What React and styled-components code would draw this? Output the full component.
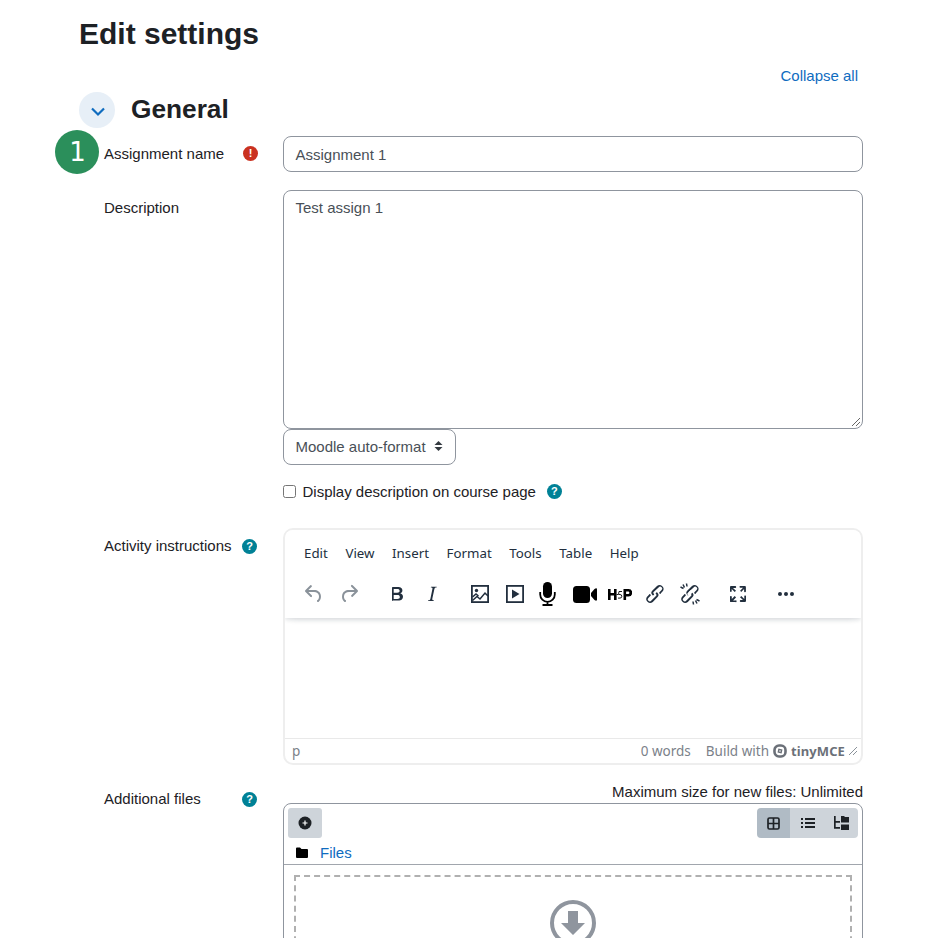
import React from "react";
import styled, { createGlobalStyle } from "styled-components";

const Global = createGlobalStyle`
  html, body { margin: 0; padding: 0; background: #fff; height: 938px; overflow: hidden; }
  body { font-family: "Liberation Sans", Arial, sans-serif; font-size: 15px; color: #1d2125; }
  * { box-sizing: border-box; }
`;

const Page = styled.main`
  position: relative;
  height: 938px;
  overflow: hidden;
  padding: 17px 75px 0 79px;
`;
const Title = styled.h1`
  margin: 0;
  font-size: 30px;
  line-height: 34px;
  font-weight: 700;
`;
const CollapseRow = styled.div`
  display: flex;
  justify-content: flex-end;
  margin-top: 16px;
  padding-right: 5px;
  height: 17px;
  line-height: 17px;
`;
const Link = styled.a`
  color: #0f6cbf;
  font-size: 15px;
`;
const SectionHead = styled.div`
  display: flex;
  align-items: center;
  gap: 16px;
  margin-top: 8px;
  height: 36px;
`;
const Toggle = styled.span`
  width: 36px;
  height: 36px;
  border-radius: 50%;
  background: #e7eff7;
  display: flex;
  align-items: center;
  justify-content: center;
  padding: 2px 0 0 2px;
`;
const SectionTitle = styled.h2`
  margin: 0 0 2px;
  font-size: 26.25px;
  line-height: 32px;
  font-weight: 700;
`;
const StepBadge = styled.span`
  position: absolute;
  left: 55px;
  top: 130px;
  width: 44px;
  height: 44px;
  padding-left: 1px;
  border-radius: 50%;
  background: #2b8f5b;
  color: #fff;
  font-family: "DejaVu Sans", sans-serif;
  font-size: 26px;
  display: flex;
  align-items: center;
  justify-content: center;
`;
const Row = styled.div`
  display: grid;
  grid-template-columns: 179px 580px;
  padding-left: 25px;
  margin-top: ${(p) => p.$top}px;
`;
const LabelCell = styled.div`
  display: flex;
  align-items: flex-start;
  padding-top: ${(p) => p.$pad ?? 9}px;
  line-height: 17px;
  font-size: 15px;
`;
const LabelText = styled.span`
  width: 138px;
  flex: none;
`;
const Dot = styled.span`
  width: 15px;
  height: 15px;
  border-radius: 50%;
  background: ${(p) => p.$bg};
  color: #fff;
  font-size: 11px;
  font-weight: 700;
  line-height: 15px;
  text-align: center;
  flex: none;
  margin-top: ${(p) => p.$mt ?? 1}px;
  margin-left: ${(p) => p.$ml ?? 0}px;
`;
const Field = styled.div`
  display: flex;
  flex-direction: column;
  align-items: flex-start;
`;
const TextInput = styled.div`
  width: 100%;
  height: 36px;
  border: 1px solid #8f959e;
  border-radius: 8px;
  padding: 9px 12px 7px 11.5px;
  line-height: 18px;
  color: #495057;
`;
const TextArea = styled(TextInput)`
  position: relative;
  height: 239px;
  padding-top: 8px;
`;
const Grip = styled.svg`
  position: absolute;
  right: 1px;
  bottom: 1px;
`;
const Select = styled.div`
  height: 36px;
  width: 173px;
  border: 1px solid #8f959e;
  border-radius: 8px;
  padding: 0 12px 2px 11.5px;
  display: flex;
  align-items: center;
  justify-content: space-between;
  color: #495057;
`;
const CheckRow = styled.label`
  display: flex;
  align-items: center;
  margin-top: 17px;
  height: 18px;
  color: #1d2125;
`;
const Box = styled.span`
  width: 13px;
  height: 13px;
  border: 1px solid #767676;
  border-radius: 2.5px;
  margin-right: 6.5px;
`;
const Editor = styled.div`
  width: 100%;
  height: 237px;
  border: 2px solid #eeeeee;
  border-radius: 10px;
  display: flex;
  flex-direction: column;
  overflow: hidden;
`;
const EditorHeader = styled.div`
  height: 88px;
  box-shadow: 0 2px 4px rgba(34, 47, 62, 0.12), 0 6px 8px -6px rgba(34, 47, 62, 0.1);
  position: relative;
  z-index: 1;
  background: #fff;
`;
const MenuBar = styled.div`
  display: flex;
  gap: 17.6px;
  padding: 14px 0 0 19px;
  height: 44px;
  font-family: "Noto Sans", sans-serif;
  font-size: 13.3px;
  line-height: 19px;
  color: #222f3e;
`;
const ToolBar = styled.div`
  display: flex;
  align-items: center;
  height: 40px;
  padding-left: 10px;
`;
const Tool = styled.span`
  width: ${(p) => p.$w ?? 36}px;
  margin-left: ${(p) => p.$ml ?? 0}px;
  display: flex;
  justify-content: center;
  align-items: center;
  flex: none;
`;
const EditorBody = styled.div`
  flex: 1;
`;
const StatusBar = styled.div`
  height: 25px;
  border-top: 1px solid #e9e9e9;
  display: flex;
  align-items: center;
  padding: 0 3px 0 7px;
  font-family: "Noto Sans", sans-serif;
  font-size: 13.5px;
  color: #7b8189;
`;
const Path = styled.span`
  margin-right: auto;
`;
const Words = styled.span`
  margin-right: 15px;
`;
const Brand = styled.span`
  display: flex;
  align-items: center;
  gap: 4px;
`;
const BrandName = styled.b`
  font-weight: 700;
  font-size: 13px;
  letter-spacing: 0.1px;
  color: #6b7078;
  margin-right: 3px;
`;
const MaxSize = styled.div`
  align-self: flex-end;
  line-height: 18px;
  height: 22px;
  padding-top: 2px;
`;
const FilePicker = styled.div`
  width: 100%;
  height: 300px;
  border: 1px solid #8f959e;
  border-radius: 8px 8px 0 0;
`;
const FileBar = styled.div`
  height: 61px;
  border-bottom: 1px solid #a1a6ad;
  padding: 4px;
  position: relative;
`;
const AddBtn = styled.span`
  width: 34px;
  height: 30px;
  background: #ced4da;
  border-radius: 3px;
  display: flex;
  align-items: center;
  justify-content: center;
`;
const ViewGroup = styled.div`
  position: absolute;
  right: 4px;
  top: 4px;
  display: flex;
  height: 30px;
  border-radius: 4px;
  overflow: hidden;
`;
const ViewBtn = styled.span`
  width: ${(p) => p.$w}px;
  background: ${(p) => (p.$on ? "#b0bbc5" : "#ced4da")};
  display: flex;
  align-items: center;
  justify-content: center;
  padding-right: ${(p) => p.$pr ?? 0}px;
`;
const Crumb = styled.div`
  display: flex;
  align-items: center;
  gap: 12px;
  padding: 5px 0 0 8px;
  height: 20px;
  margin-top: 2px;
`;
const Drop = styled.div`
  margin: 10px 10px 0;
  height: 200px;
  border: 2px dashed #b0b0b0;
  display: flex;
  justify-content: center;
  padding-top: 23px;
`;

const Navy = "#222f3e";
const Grey = "#8a929a";
const LINK = "M6.2 12.3a1 1 0 0 1 1.4 1.4l-2 2a2 2 0 1 0 2.8 2.8l4.8-4.8a1 1 0 0 0 0-1.4 1 1 0 1 1 1.4-1.3 2.9 2.9 0 0 1 0 4L9.8 19.900a3.900 3.900 0 0 1-5.500-5.500l1.900-2zm11.600-.6a1 1 0 0 1-1.400-1.400l2-2a2 2 0 1 0-2.800-2.800L10.600 10a1 1 0 0 0 0 1.400 1 1 0 1 1-1.400 1.300 2.900 2.900 0 0 1 0-4L14 4.100a3.900 3.900 0 0 1 5.500 5.500l-1.900 2z";

const TinyIcon = ({ d, fill = Navy, size = 24, children }) => (
  <svg width={size} height={size} viewBox="0 0 24 24" fill={fill}>
    {d && <path d={d} />}
    {children}
  </svg>
);

const App = () => (
  <>
    <Global />
    <Page>
      <Title>Edit settings</Title>
      <CollapseRow><Link>Collapse all</Link></CollapseRow>
      <SectionHead>
        <Toggle>
          <svg width="18" height="11" viewBox="0 0 18 11" fill="none" stroke="#0f6cbf" strokeWidth="2.2">
            <path d="M3 2.500l6 6 6-6" />
          </svg>
        </Toggle>
        <SectionTitle>General</SectionTitle>
      </SectionHead>
      <StepBadge>1</StepBadge>

      <Row $top={8}>
        <LabelCell $pad={9}>
          <LabelText>Assignment name</LabelText>
          <Dot $bg="#ca3120" $ml={1}>!</Dot>
        </LabelCell>
        <Field><TextInput>Assignment 1</TextInput></Field>
      </Row>

      <Row $top={18}>
        <LabelCell><LabelText>Description</LabelText></LabelCell>
        <Field>
          <TextArea>
            Test assign 1
            <Grip width="10" height="10" viewBox="0 0 10 10" stroke="#666" strokeWidth="1">
              <path d="M9 1 1 9M9 5 5 9" />
            </Grip>
          </TextArea>
          <Select>
            Moodle auto-format
            <svg width="9" height="12" viewBox="0 0 9 12" fill="#343a40"><path d="M4.500 1 8.500 5H.5zM4.500 11 .5 7h8z" /></svg>
          </Select>
          <CheckRow>
            <Box />
            Display description on course page
            <Dot $bg="#008196" $ml={11} $mt={0}>?</Dot>
          </CheckRow>
        </Field>
      </Row>

      <Row $top={28}>
        <LabelCell $pad={9}>
          <LabelText>Activity instructions</LabelText>
          <Dot $bg="#008196" $mt={2}>?</Dot>
        </LabelCell>
        <Field>
          <Editor>
            <EditorHeader>
              <MenuBar>
                <span>Edit</span><span>View</span><span>Insert</span><span>Format</span><span>Tools</span><span>Table</span><span>Help</span>
              </MenuBar>
              <ToolBar>
                <Tool $w={35} $ml={1}>
                  <TinyIcon fill={Grey} d="M6.400 8H12c3.700 0 6.200 2 6.800 5.100.600 2.700-.400 5.600-2.300 6.800a1 1 0 0 1-1-1.800c1.100-.6 1.800-2.700 1.400-4.600-.5-2.100-2.100-3.500-4.900-3.500H6.400l3.300 3.300a1 1 0 1 1-1.400 1.400l-5-5a1 1 0 0 1 0-1.400l5-5a1 1 0 0 1 1.400 1.400L6.400 8z" />
                </Tool>
                <Tool>
                  <TinyIcon fill={Grey} d="M17.600 10H12c-2.800 0-4.400 1.400-4.900 3.500-.4 2 .3 4 1.400 4.600a1 1 0 1 1-1 1.800c-2-1.200-2.900-4.100-2.300-6.800C5.800 10 8.300 8 12 8h5.600l-3.300-3.300a1 1 0 1 1 1.400-1.400l5 5a1 1 0 0 1 0 1.400l-5 5a1 1 0 0 1-1.400-1.400l3.300-3.300z" />
                </Tool>
                <Tool $ml={12}>
                  <TinyIcon d="M7.800 19c-.3 0-.5 0-.6-.2l-.2-.5V5.700c0-.2 0-.4.2-.5l.6-.2h5c1.500 0 2.700.3 3.500 1 .7.600 1.100 1.400 1.100 2.500a3 3 0 0 1-.6 1.800c-.4.600-1 1-1.600 1.200.8.100 1.500.5 2 1.100.500.600.800 1.300.800 2.100 0 1.200-.400 2.100-1.200 2.800-.800.700-2 1-3.500 1H7.800zm.9-12v3.800h3.500c.8 0 1.400-.2 1.800-.5.400-.3.600-.8.600-1.500 0-1.200-.8-1.800-2.400-1.800H8.700zm0 5.500V17h3.700c.8 0 1.400-.2 1.800-.5.400-.3.600-.8.600-1.500s-.2-1.300-.6-1.600c-.4-.3-1-.4-1.800-.4H8.700z" />
                </Tool>
                <Tool $w={34}>
                  <TinyIcon d="M16.700 4.700l-.1.900h-.3c-.6 0-1 0-1.400.3-.3.300-.4.600-.5 1.100l-2.100 9.800v.6c0 .5.400.8 1.400.8h.2l-.2.800H8l.2-.8h.2c1.100 0 1.800-.5 2-1.500l2-9.800.1-.5c0-.6-.4-.8-1.400-.8h-.3l.2-.9h5.800z" />
                </Tool>
                <Tool $ml={13}>
                  <svg width="18" height="18" viewBox="0 0 18 18" fill="none" stroke={Navy} strokeWidth="1.800"><rect x=".9" y=".9" width="16.200" height="16.200" /><circle cx="5.500" cy="5.500" r="1.700" fill={Navy} stroke="none" /><path d="M1.500 15.500l4.500-4 3 2.500 5-6 3 3M1.500 12l3.500-3 2.500 2" strokeWidth="1.500" /></svg>
                </Tool>
                <Tool $w={34}>
                  <svg width="18" height="18" viewBox="0 0 18 18" fill="none" stroke={Navy} strokeWidth="1.800"><rect x=".9" y=".9" width="16.200" height="16.200" /><path d="M6 4.500v9l7.500-4.500z" fill={Navy} stroke="none" /></svg>
                </Tool>
                <Tool $w={30}>
                  <svg width="17" height="24" viewBox="0 0 17 24" fill="#000"><rect x="4" y="0" width="9" height="16" rx="4.500" /><path d="M1.200 10v2.500a7.300 7.300 0 0 0 14.600 0V10M8.500 20v3M3.500 23h10" fill="none" stroke="#000" strokeWidth="1.800" /></svg>
                </Tool>
                <Tool $w={46}>
                  <svg width="24" height="17" viewBox="0 0 24 17" fill="#000"><rect x="0" y="0" width="17" height="17" rx="3.500" /><path d="M18 7 21.500 3Q24 1.500 24 3.500v10q0 2-2.500.5L18 10z" /></svg>
                </Tool>
                <Tool $w={24}>
                  <svg width="24" height="11" viewBox="0 0 24 11" fill="#000" fillRule="evenodd"><path d="M0 0h2.600v4h3.400V0h2.600v11H6V6.500H2.600V11H0zM15.500 0h5a3.700 3.700 0 0 1 0 7.400h-2.400V11h-2.600zM18.100 2.400V5h2a1.300 1.300 0 0 0 0-2.600z" /><path d="M8.600 5.500h1.400M14 2.500h-3l-.5 3h1.500a1.800 1.800 0 0 1 0 3.600h-2" stroke="#000" strokeWidth=".9" fill="none" /></svg>
                </Tool>
                <Tool $w={46}><TinyIcon d={LINK} /></Tool>
                <Tool $w={24}>
                  <TinyIcon d={LINK}>
                    <path d="M5 2.500l1.500 3M2.500 5l3 1.500M8.500 1.500l.5 3M19 21.500l-1.500-3M21.500 19l-3-1.500M15.500 22.500l-.5-3" stroke={Navy} strokeWidth="1.500" />
                    <path d="M10 13l4-4" stroke="#fff" strokeWidth="3" />
                  </TinyIcon>
                </Tool>
                <Tool $ml={18}>
                  <TinyIcon d="M15.300 10l-1.200-1.300 2.900-3h-2.300a.9.9 0 1 1 0-1.700H19c.5 0 .9.400.9.900v4.400a.9.9 0 1 1-1.800 0V7l-2.900 3zm0 4l3 3v-2.300a.9.9 0 1 1 1.700 0V19c0 .5-.4.900-.9.900h-4.400a.9.9 0 1 1 0-1.800H17l-3-2.900 1.300-1.200zM10 15.400l-2.900 3h2.300a.9.9 0 1 1 0 1.700H5a.9.9 0 0 1-1-.9v-4.400a.9.9 0 1 1 1.800 0V17l2.900-3 1.200 1.300zM8.700 10L5.700 7v2.300a.9.9 0 0 1-1.700 0V5c0-.5.400-.9.900-.9h4.400a.9.9 0 0 1 0 1.800H7l3 2.900-1.300 1.200z" />
                </Tool>
                <Tool $ml={12}>
                  <TinyIcon d="M6 10a2 2 0 0 0-2 2c0 1.100.9 2 2 2a2 2 0 0 0 2-2 2 2 0 0 0-2-2zm12 0a2 2 0 0 0-2 2c0 1.100.9 2 2 2a2 2 0 0 0 2-2 2 2 0 0 0-2-2zm-6 0a2 2 0 0 0-2 2c0 1.100.9 2 2 2a2 2 0 0 0 2-2 2 2 0 0 0-2-2z" />
                </Tool>
              </ToolBar>
            </EditorHeader>
            <EditorBody />
            <StatusBar>
              <Path>p</Path>
              <Words>0 words</Words>
              <Brand>
                Build with
                <svg width="14" height="14" viewBox="0 0 14 14" fill="none" stroke="#6b7078"><rect x="1.500" y="1.500" width="11" height="11" rx="4.500" strokeWidth="2.600" /><rect x="5.600" y="5.600" width="2.800" height="2.800" strokeWidth="1.400" transform="rotate(12 7 7)" /></svg>
                <BrandName>tinyMCE</BrandName>
              </Brand>
              <svg width="10" height="10" viewBox="0 0 10 10" stroke="#8a929a" strokeWidth="1"><path d="M9 1 1 9M9 5 5 9" /></svg>
            </StatusBar>
          </Editor>
        </Field>
      </Row>

      <Row $top={16}>
        <LabelCell $pad={9}>
          <LabelText>Additional files</LabelText>
          <Dot $bg="#008196" $mt={2}>?</Dot>
        </LabelCell>
        <Field>
          <MaxSize>Maximum size for new files: Unlimited</MaxSize>
          <FilePicker>
            <FileBar>
              <AddBtn>
                <svg width="14" height="14" viewBox="0 0 14 14"><circle cx="7" cy="7" r="6.500" fill="#1d2125" /><path d="M7 4.500v5M4.500 7h5" stroke="#fff" strokeWidth="1.200" /></svg>
              </AddBtn>
              <ViewGroup>
                <ViewBtn $on $w={33}>
                  <svg width="13" height="13" viewBox="0 0 13 13" fill="none" stroke="#1d2125" strokeWidth="1.700"><rect x="1" y="1" width="11" height="11" rx="1.500" /><path d="M6.500 1v11M1 6.500h11" /></svg>
                </ViewBtn>
                <ViewBtn $w={35}>
                  <svg width="14" height="12" viewBox="0 0 14 12" fill="#1d2125"><rect x="0" y="1" width="2" height="2" /><rect x="0" y="5" width="2" height="2" /><rect x="0" y="9" width="2" height="2" /><rect x="4" y="1" width="10" height="2" /><rect x="4" y="5" width="10" height="2" /><rect x="4" y="9" width="10" height="2" /></svg>
                </ViewBtn>
                <ViewBtn $w={33} $pr={2}>
                  <svg width="16" height="15" viewBox="0 0 16 15" fill="#1d2125"><path d="M1 0h1.700v5H7v1.700H2.700V11H7v1.700H1zM8 0h3l1 1h4v5.500H8zM8 8.500h8V14H8z" /></svg>
                </ViewBtn>
              </ViewGroup>
              <Crumb>
                <svg width="12" height="11" viewBox="0 0 12 11" fill="#000"><path d="M0 1.500A1 1 0 0 1 1 .5h3l1.500 1.500H11a1 1 0 0 1 1 1V10a1 1 0 0 1-1 1H1a1 1 0 0 1-1-1z" /></svg>
                <Link>Files</Link>
              </Crumb>
            </FileBar>
            <Drop>
              <svg width="46" height="46" viewBox="0 0 46 46">
                <circle cx="23" cy="23" r="21" fill="none" stroke="#8f959e" strokeWidth="4" />
                <path d="M18 11h10v12h7L23 35 11 23h7z" fill="#8f959e" />
              </svg>
            </Drop>
          </FilePicker>
        </Field>
      </Row>
    </Page>
  </>
);

export default App;
